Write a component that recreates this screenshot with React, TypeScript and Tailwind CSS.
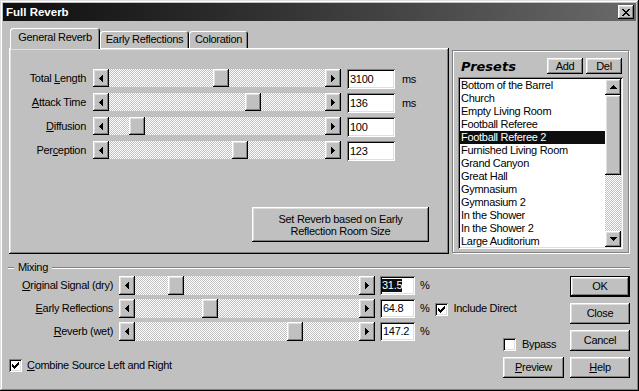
import React from "react";

const RAISED =
  "shadow-[inset_-1px_-1px_#000000,inset_1px_1px_#ffffff,inset_-2px_-2px_#808080,inset_2px_2px_#dfdfdf]";
const SUNKEN =
  "shadow-[inset_1px_1px_#808080,inset_-1px_-1px_#ffffff,inset_2px_2px_#000000,inset_-2px_-2px_#dfdfdf]";
const DITHER =
  "[background-image:repeating-conic-gradient(#c0c0c0_0%_25%,#ffffff_0%_50%)] [background-size:2px_2px]";

type R = [number, number, number, number];

function Pix({ w, h, rects }: { w: number; h: number; rects: R[] }) {
  return (
    <svg width={w} height={h} viewBox={`0 0 ${w} ${h}`} shapeRendering="crispEdges">
      {rects.map((r, i) => (
        <rect key={i} x={r[0]} y={r[1]} width={r[2]} height={r[3]} fill="#000" />
      ))}
    </svg>
  );
}

const LeftTri = () => <Pix w={4} h={7} rects={[[0, 3, 1, 1], [1, 2, 1, 3], [2, 1, 1, 5], [3, 0, 1, 7]]} />;
const RightTri = () => <Pix w={4} h={7} rects={[[0, 0, 1, 7], [1, 1, 1, 5], [2, 2, 1, 3], [3, 3, 1, 1]]} />;
const UpTri = () => <Pix w={7} h={4} rects={[[3, 0, 1, 1], [2, 1, 3, 1], [1, 2, 5, 1], [0, 3, 7, 1]]} />;
const DownTri = () => <Pix w={7} h={4} rects={[[0, 0, 7, 1], [1, 1, 5, 1], [2, 2, 3, 1], [3, 3, 1, 1]]} />;
const CloseX = () => (
  <Pix
    w={8}
    h={7}
    rects={[
      [0, 0, 2, 1], [6, 0, 2, 1],
      [1, 1, 2, 1], [5, 1, 2, 1],
      [2, 2, 4, 1],
      [3, 3, 2, 1],
      [2, 4, 4, 1],
      [1, 5, 2, 1], [5, 5, 2, 1],
      [0, 6, 2, 1], [6, 6, 2, 1],
    ]}
  />
);
const Check = () => (
  <Pix
    w={7}
    h={7}
    rects={[[0, 2, 1, 3], [1, 3, 1, 3], [2, 4, 1, 3], [3, 3, 1, 3], [4, 2, 1, 3], [5, 1, 1, 3], [6, 0, 1, 3]]}
  />
);

function Btn({ children, className = "" }: { children?: React.ReactNode; className?: string }) {
  return (
    <div className={`bg-[#c0c0c0] ${RAISED} flex items-center justify-center text-center shrink-0 ${className}`}>
      {children}
    </div>
  );
}

function Slider({ className, pos }: { className: string; pos: number }) {
  return (
    <div className={`flex shrink-0 ${className}`}>
      <Btn className="w-[16px] h-full">
        <LeftTri />
      </Btn>
      <div className={`flex-1 h-full flex ${DITHER}`}>
        <div className={`w-[16px] h-full bg-[#c0c0c0] ${RAISED}`} style={{ marginLeft: pos }} />
      </div>
      <Btn className="w-[16px] h-full">
        <RightTri />
      </Btn>
    </div>
  );
}

function Field({ value, className, selected }: { value: string; className: string; selected?: boolean }) {
  return (
    <div className={`bg-white ${SUNKEN} flex items-center pl-[2px] shrink-0 ${className}`}>
      {selected ? <span className="bg-[#0e0e0e] text-white">{value}</span> : <span className="pl-[1px]">{value}</span>}
    </div>
  );
}

function Checkbox({ checked }: { checked?: boolean }) {
  return (
    <div className={`w-[13px] h-[13px] bg-white ${SUNKEN} flex items-center justify-center shrink-0`}>
      {checked && <Check />}
    </div>
  );
}

function Tab({ children, selected, className }: { children: React.ReactNode; selected?: boolean; className: string }) {
  return (
    <div
      className={`bg-[#c0c0c0] rounded-t-[3px] shadow-[inset_1px_1px_#ffffff,inset_-1px_0_#000000,inset_-2px_0_#808080] flex items-center justify-center whitespace-nowrap shrink-0 ${
        selected ? "h-[21px] -mb-[1px] relative z-10 pb-[2px]" : "h-[17px]"
      } ${className}`}
    >
      {children}
    </div>
  );
}

function TopRow({ label, pos, value, unit }: { label: React.ReactNode; pos: number; value: string; unit?: string }) {
  return (
    <div className="flex items-start h-[24px]">
      <div className="w-[77px] h-[18px] flex items-center justify-end whitespace-nowrap">{label}</div>
      <Slider className="ml-[7px] w-[248px] h-[18px]" pos={pos} />
      <Field className="ml-[6px] w-[48px] h-[20px]" value={value} />
      {unit && <div className="ml-[7px] h-[20px] flex items-center">{unit}</div>}
    </div>
  );
}

function U({ children }: { children: React.ReactNode }) {
  return <span className="underline underline-offset-1">{children}</span>;
}

const presets = [
  "Bottom of the Barrel",
  "Church",
  "Empty Living Room",
  "Football Referee",
  "Football Referee 2",
  "Furnished Living Room",
  "Grand Canyon",
  "Great Hall",
  "Gymnasium",
  "Gymnasium 2",
  "In the Shower",
  "In the Shower 2",
  "Large Auditorium",
];

export default function App() {
  return (
    <div className="w-[639px] h-[391px] bg-[#c0c0c0] font-['Liberation_Sans',Arial,sans-serif] text-[11px] leading-[13px] tracking-[-0.3px] text-black p-[3px] flex flex-col overflow-hidden select-none shadow-[inset_-1px_-1px_#000000,inset_1px_1px_#dfdfdf,inset_-2px_-2px_#808080,inset_2px_2px_#ffffff]">
      {/* Title bar */}
      <div className="h-[18px] shrink-0 flex items-center pl-[3px] pr-[2px] bg-linear-to-r from-[#0f0f0f] to-[#6a6a6a]">
        <span className="text-white font-bold text-[11.5px] tracking-normal">Full Reverb</span>
        <Btn className="ml-auto w-[16px] h-[14px]">
          <CloseX />
        </Btn>
      </div>

      {/* Top section */}
      <div className="flex items-start mt-[7px] ml-[6px]">
        <div className="w-[440px] flex flex-col">
          <div className="flex items-end h-[20px] pl-[1px]">
            <Tab selected className="w-[90px]">
              General Reverb
            </Tab>
            <Tab className="w-[89px]">Early Reflections</Tab>
            <Tab className="w-[59px]">Coloration</Tab>
          </div>
          <div className={`h-[206px] ${RAISED} flex flex-col pt-[21px]`}>
            <TopRow
              label={
                <span>
                  Total <U>L</U>ength
                </span>
              }
              pos={104}
              value="3100"
              unit="ms"
            />
            <TopRow
              label={
                <span>
                  <U>A</U>ttack Time
                </span>
              }
              pos={136}
              value="136"
              unit="ms"
            />
            <TopRow
              label={
                <span>
                  <U>D</U>iffusion
                </span>
              }
              pos={20}
              value="100"
            />
            <TopRow
              label={
                <span>
                  Per<U>c</U>eption
                </span>
              }
              pos={123}
              value="123"
            />
            <Btn className="self-end mr-[20px] mt-[42px] w-[177px] h-[35px] leading-[12px]">
              Set Reverb based on Early
              <br />
              Reflection Room Size
            </Btn>
          </div>
        </div>

        {/* Presets */}
        <div className="ml-[3px] mt-[22px] w-[177px] h-[203px] border border-[#808080] shadow-[inset_1px_1px_#ffffff,1px_1px_#ffffff] px-[5px] pt-[7px] flex flex-col">
          <div className="flex items-center h-[16px]">
            <span className="pl-[3px] font-['DejaVu_Sans',sans-serif] font-bold italic text-[13px] tracking-normal">
              Presets
            </span>
            <Btn className="ml-auto w-[36px] h-[16px]">Add</Btn>
            <Btn className="ml-[3px] mr-[1px] w-[36px] h-[16px]">Del</Btn>
          </div>
          <div className={`mt-[3px] h-[172px] bg-white ${SUNKEN} p-[2px] flex`}>
            <div className="flex-1 flex flex-col overflow-hidden">
              {presets.map((p, i) => (
                <div
                  key={p}
                  className={`h-[13px] shrink-0 leading-[13px] pl-[1px] whitespace-nowrap ${
                    i === 4 ? "bg-[#0e0e0e] text-white" : ""
                  }`}
                >
                  {p}
                </div>
              ))}
            </div>
            <div className="w-[16px] flex flex-col">
              <Btn className="h-[16px]">
                <UpTri />
              </Btn>
              <Btn className="h-[80px]" />
              <div className={`flex-1 ${DITHER}`} />
              <Btn className="h-[16px]">
                <DownTri />
              </Btn>
            </div>
          </div>
        </div>
      </div>

      {/* Mixing separator */}
      <div className="flex items-center h-[13px] mt-[7px] ml-[5px] mr-[6px]">
        <div className="w-[6px] h-0 border-t border-t-[#808080] border-b border-b-white" />
        <span className="ml-[4px] mr-[4px]">Mixing</span>
        <div className="flex-1 h-0 border-t border-t-[#808080] border-b border-b-white" />
      </div>

      {/* Mixing area */}
      <div className="flex mt-[2px]">
        <div className="w-[561px] h-[102px] grid grid-cols-[500px_61px] grid-rows-[19px_19px_19px_1fr] gap-y-[4px]">
          <div className="col-start-1 col-span-2 row-start-1 flex items-center">
            <div className="w-[110px] text-right whitespace-nowrap">
              <U>O</U>riginal Signal (dry)
            </div>
            <Slider className="ml-[6px] w-[256px] h-[19px]" pos={33} />
            <Field className="ml-[5px] w-[35px] h-[19px]" value="31.5" selected />
            <span className="ml-[5px]">%</span>
          </div>
          <div className="col-start-1 col-span-2 row-start-2 flex items-center">
            <div className="w-[110px] text-right whitespace-nowrap">
              <U>E</U>arly Reflections
            </div>
            <Slider className="ml-[6px] w-[256px] h-[19px]" pos={67} />
            <Field className="ml-[5px] w-[35px] h-[19px]" value="64.8" />
            <span className="ml-[5px]">%</span>
            <div className="ml-[6px] mt-[2px]">
              <Checkbox checked />
            </div>
            <span className="ml-[5px] whitespace-nowrap">Include Direct</span>
          </div>
          <div className="col-start-1 row-start-3 flex items-center">
            <div className="w-[110px] text-right whitespace-nowrap">
              <U>R</U>everb (wet)
            </div>
            <Slider className="ml-[6px] w-[256px] h-[19px]" pos={152} />
            <Field className="ml-[5px] w-[35px] h-[19px]" value="147.2" />
            <span className="ml-[5px]">%</span>
          </div>
          <div className="col-start-2 row-start-3 row-span-2 flex flex-col justify-end">
            <div className="flex items-center h-[13px]">
              <Checkbox />
              <span className="ml-[6px]">Bypass</span>
            </div>
            <Btn className="mt-[6px] w-[61px] h-[21px]">
              <span>
                <U>P</U>review
              </span>
            </Btn>
          </div>
          <div className="col-start-1 row-start-4 self-end mb-[6px] flex items-center pl-[6px] h-[13px]">
            <Checkbox checked />
            <span className="ml-[5px] whitespace-nowrap">
              <U>C</U>ombine Source Left and Right
            </span>
          </div>
        </div>
        <div className="ml-[6px] w-[60px] flex flex-col gap-[6px]">
          <Btn className="h-[21px] border border-black">OK</Btn>
          <Btn className="h-[21px]">Close</Btn>
          <Btn className="h-[21px]">Cancel</Btn>
          <Btn className="h-[21px]">
            <span>
              <U>H</U>elp
            </span>
          </Btn>
        </div>
      </div>
    </div>
  );
}
